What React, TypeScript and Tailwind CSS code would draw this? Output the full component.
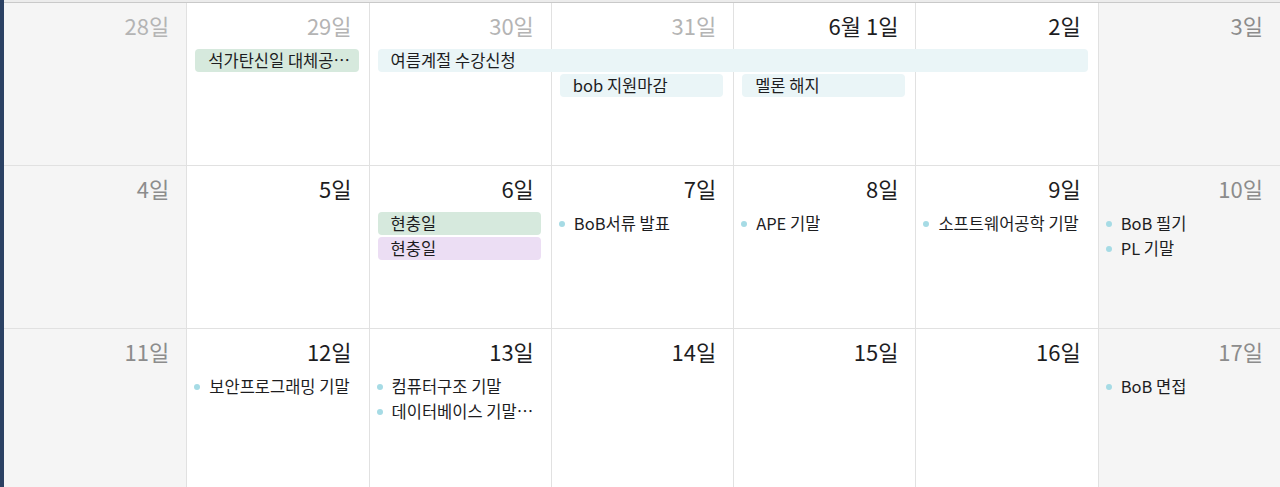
type Day = {
  label: string;
  tone: "prev" | "weekend" | "current";
  weekend?: boolean;
};

type Ev = {
  title: string;
  kind: "green" | "blue" | "purple" | "dot";
  place: string;
};

const colClass = [
  "col-start-1",
  "col-start-2",
  "col-start-3",
  "col-start-4",
  "col-start-5",
  "col-start-6",
  "col-start-7",
];

const weeks: { days: Day[]; events: Ev[] }[] = [
  {
    days: [
      { label: "28일", tone: "prev", weekend: true },
      { label: "29일", tone: "prev" },
      { label: "30일", tone: "prev" },
      { label: "31일", tone: "prev" },
      { label: "6월 1일", tone: "current" },
      { label: "2일", tone: "current" },
      { label: "3일", tone: "weekend", weekend: true },
    ],
    events: [
      { title: "석가탄신일 대체공…", kind: "green", place: "row-start-2 col-start-2 col-end-3" },
      { title: "여름계절 수강신청", kind: "blue", place: "row-start-2 col-start-3 col-end-7" },
      { title: "bob 지원마감", kind: "blue", place: "row-start-3 col-start-4 col-end-5" },
      { title: "멜론 해지", kind: "blue", place: "row-start-3 col-start-5 col-end-6" },
    ],
  },
  {
    days: [
      { label: "4일", tone: "weekend", weekend: true },
      { label: "5일", tone: "current" },
      { label: "6일", tone: "current" },
      { label: "7일", tone: "current" },
      { label: "8일", tone: "current" },
      { label: "9일", tone: "current" },
      { label: "10일", tone: "weekend", weekend: true },
    ],
    events: [
      { title: "현충일", kind: "green", place: "row-start-2 col-start-3 col-end-4" },
      { title: "현충일", kind: "purple", place: "row-start-3 col-start-3 col-end-4" },
      { title: "BoB서류 발표", kind: "dot", place: "row-start-2 col-start-4 col-end-5" },
      { title: "APE 기말", kind: "dot", place: "row-start-2 col-start-5 col-end-6" },
      { title: "소프트웨어공학 기말", kind: "dot", place: "row-start-2 col-start-6 col-end-7" },
      { title: "BoB 필기", kind: "dot", place: "row-start-2 col-start-7 col-end-8" },
      { title: "PL 기말", kind: "dot", place: "row-start-3 col-start-7 col-end-8" },
    ],
  },
  {
    days: [
      { label: "11일", tone: "weekend", weekend: true },
      { label: "12일", tone: "current" },
      { label: "13일", tone: "current" },
      { label: "14일", tone: "current" },
      { label: "15일", tone: "current" },
      { label: "16일", tone: "current" },
      { label: "17일", tone: "weekend", weekend: true },
    ],
    events: [
      { title: "보안프로그래밍 기말", kind: "dot", place: "row-start-2 col-start-2 col-end-3" },
      { title: "컴퓨터구조 기말", kind: "dot", place: "row-start-2 col-start-3 col-end-4" },
      { title: "데이터베이스 기말…", kind: "dot", place: "row-start-3 col-start-3 col-end-4" },
      { title: "BoB 면접", kind: "dot", place: "row-start-2 col-start-7 col-end-8" },
    ],
  },
];

const toneClass = {
  prev: "text-[#b4b4b4]",
  weekend: "text-[#8c8c8c]",
  current: "text-[#1d1d1f]",
};

const pillClass = {
  green: "bg-[#d6e9dd]",
  blue: "bg-[#eaf5f7]",
  purple: "bg-[#ecdef4]",
  dot: "",
};

const EventItem = ({ ev }: { ev: Ev }) => {
  if (ev.kind === "dot") {
    return (
      <div className={`${ev.place} flex items-center h-[23px] pl-[8px] pr-2 min-w-0`}>
        <span className="w-[6px] h-[6px] rounded-full bg-[#a6dbe5] flex-shrink-0"></span>
        <span className="ml-[9px] text-[16.5px] leading-[23px] text-[#1d1d1f] whitespace-nowrap overflow-hidden">
          {ev.title}
        </span>
      </div>
    );
  }
  return (
    <div
      className={`${ev.place} ${pillClass[ev.kind]} ml-[9px] mr-[10px] h-[23px] rounded-[4px] flex items-center pl-[13px] min-w-0`}
    >
      <span className="text-[16.5px] leading-[23px] text-[#1d1d1f] whitespace-nowrap overflow-hidden">
        {ev.title}
      </span>
    </div>
  );
};

export default function App() {
  return (
    <div className="w-[1280px] h-[487px] overflow-hidden flex bg-white font-['Noto_Sans_CJK_KR','Noto_Sans',sans-serif]">
      {/* desktop edge */}
      <div className="w-[4px] flex-shrink-0 bg-[#2b4163]"></div>

      <div className="flex-1 flex flex-col">
        <div className="h-[3px] flex-shrink-0 bg-[#ececec] border-b border-[#c9c9c9]"></div>

        {weeks.map((week, w) => (
          <div
            key={w}
            className="grid grid-cols-7 grid-rows-[44px_23px_23px_1fr] gap-y-[2px] h-[163px] flex-shrink-0 border-b border-[#e1e1e1]"
          >
            {week.days.map((day, i) => (
              <div
                key={i}
                className={`${colClass[i]} row-start-1 row-end-5 ${
                  day.weekend ? "bg-[#f5f5f5]" : "bg-white"
                } ${i > 0 ? "border-l border-[#e1e1e1]" : ""} flex justify-end pt-[9px] pr-[17px]`}
              >
                <span className={`text-[22px] leading-[26px] ${toneClass[day.tone]}`}>{day.label}</span>
              </div>
            ))}
            {week.events.map((ev, k) => (
              <EventItem key={k} ev={ev} />
            ))}
          </div>
        ))}
      </div>
    </div>
  );
}
